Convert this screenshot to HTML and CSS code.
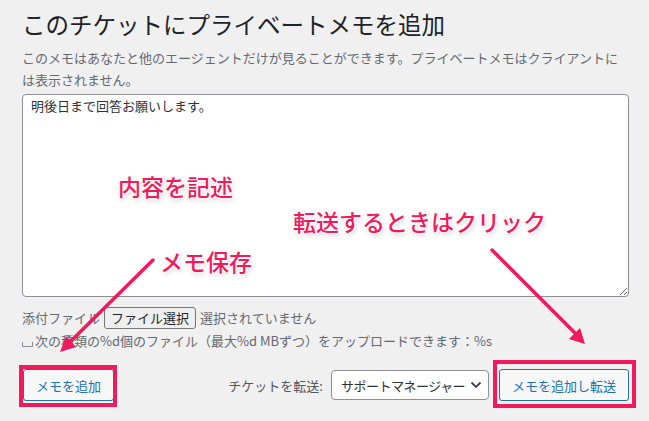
FILE: index.html
```html
<!DOCTYPE html>
<html lang="ja">
<head>
<meta charset="utf-8">
<title>プライベートメモ</title>
<link rel="stylesheet" href="styles.css">
</head>
<body>
<div class="page">
  <h1 class="title">このチケットにプライベートメモを追加</h1>
  <p class="desc">このメモはあなたと他のエージェントだけが見ることができます。プライベートメモはクライアントには表示されません。</p>
  <textarea class="memo">明後日まで回答お願いします。</textarea>
  <div class="attach">
    <span class="muted">添付ファイル</span>
    <span class="file-btn">ファイル選択</span>
    <span class="muted">選択されていません</span>
  </div>
  <p class="note"><span class="blank"></span>次の種類の%d個のファイル（最大%d MBずつ）をアップロードできます：%s</p>
  <div class="actions">
    <button class="btn">メモを追加</button>
    <div class="forward">
      <span class="forward-label">チケットを転送:</span>
      <div class="select">
        <span class="select-text">サポートマネージャー</span>
        <svg width="12" height="8" viewBox="0 0 12 8"><path d="M1.5 1.5 L6 6 L10.5 1.5" fill="none" stroke="#3c434a" stroke-width="1.8"/></svg>
      </div>
      <button class="btn">メモを追加し転送</button>
    </div>
  </div>

  <svg class="arrows" width="649" height="421" viewBox="0 0 649 421">
    <line x1="153" y1="260" x2="71" y2="341" stroke="#f01a5c" stroke-width="3.5" stroke-linecap="round"/>
    <polygon points="60,352 76,347 66,336" fill="#f01a5c"/>
    <line x1="492" y1="250" x2="575" y2="333" stroke="#f01a5c" stroke-width="3.5" stroke-linecap="round"/>
    <polygon points="585,344 569,339 580,328" fill="#f01a5c"/>
  </svg>
  <span class="callout c1">内容を記述</span>
  <span class="callout c2">転送するときはクリック</span>
  <span class="callout c3">メモ保存</span>
  <div class="frame f1"></div>
  <div class="frame f2"></div>
</div>
</body>
</html>
```

FILE: styles.css
```css
* { box-sizing: border-box; }
html, body {
  margin: 0;
  padding: 0;
  background: #f0f0f1;
}
body {
  font-family: "Noto Sans CJK JP", "Noto Sans", sans-serif;
  color: #1d2327;
  width: 649px;
  height: 421px;
  overflow: hidden;
}
.page {
  position: relative;
  width: 649px;
  height: 421px;
  padding: 0 20px 0 22px;
}
.title {
  margin: 0;
  padding-top: 8px;
  font-size: 23.5px;
  font-weight: 400;
  line-height: 32px;
  color: #1d2327;
}
.desc {
  margin: 7px 0 0;
  font-size: 13px;
  line-height: 22px;
  color: #646970;
}
.memo {
  display: block;
  width: 607px;
  height: 203px;
  margin-top: 3px;
  padding: 1px 8px;
  border: 1px solid #8c8f94;
  border-radius: 4px;
  background: #fff;
  font-family: "Noto Sans CJK JP", sans-serif;
  font-size: 13px;
  line-height: 20px;
  color: #2c3338;
  resize: both;
}
.attach {
  display: flex;
  align-items: center;
  gap: 4px;
  margin-top: 9px;
  font-size: 13px;
  height: 23px;
}
.muted { color: #646970; }
.file-btn {
  display: inline-flex;
  align-items: center;
  height: 22px;
  padding: 0 6px;
  border: 1px solid #767676;
  border-radius: 3px;
  background: #efefef;
  color: #1d2327;
}
.note {
  margin: 1px 0 0;
  font-size: 13px;
  line-height: 22px;
  color: #646970;
}
.blank {
  display: inline-block;
  width: 11px;
  height: 5px;
  margin-right: 2px;
  border: 1px solid #8c8f94;
  border-top: none;
  vertical-align: -1px;
}
.actions {
  display: flex;
  justify-content: space-between;
  align-items: center;
  margin-top: 17px;
  padding-left: 1px;
}
.forward {
  display: flex;
  align-items: center;
}
.forward-label {
  font-size: 13px;
  color: #50575e;
  margin-right: 8px;
}
.select {
  display: flex;
  align-items: center;
  justify-content: space-between;
  width: 158px;
  height: 30px;
  padding: 0 6px 0 9px;
  margin-right: 10px;
  border: 1px solid #8c8f94;
  border-radius: 4px;
  background: #fff;
  font-size: 13px;
  color: #2c3338;
}
.select-text {
  white-space: nowrap;
  letter-spacing: -0.5px;
}
.btn {
  height: 32px;
  padding: 0 12px;
  border: 1px solid #2271b1;
  border-radius: 3px;
  background: #f6f7f7;
  color: #2271b1;
  font-family: "Noto Sans CJK JP", sans-serif;
  font-size: 13px;
}
.arrows {
  position: absolute;
  left: 0;
  top: 0;
  pointer-events: none;
}
.callout {
  position: absolute;
  font-size: 23px;
  line-height: 1;
  font-weight: 500;
  color: #f01a5c;
  white-space: nowrap;
  text-shadow: 0 0 2px #fff, 0 0 2px #fff, 0 0 3px #fff, 0 0 4px #fff, 1px 2px 5px rgba(0,0,0,0.25);
}
.c1 { left: 118px; top: 175px; }
.c2 { left: 293px; top: 210px; }
.c3 { left: 160px; top: 250px; }
.frame {
  position: absolute;
  border: 4px solid #f01a5c;
}
.f1 { left: 19px; top: 365px; width: 98px; height: 42px; }
.f2 { left: 493px; top: 360px; width: 143px; height: 48px; }
```
